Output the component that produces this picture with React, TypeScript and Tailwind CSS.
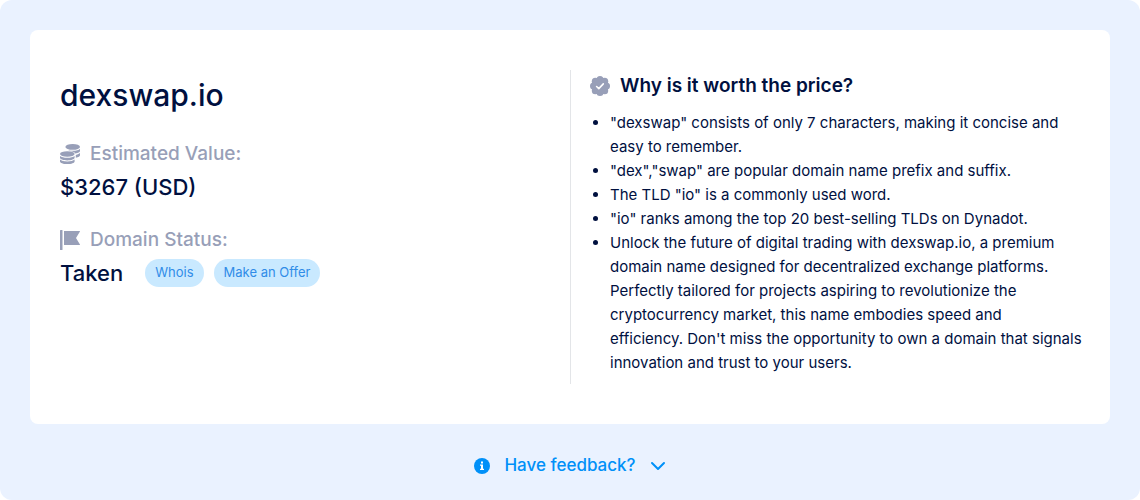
import React from "react";

const reasons = [
  '"dexswap" consists of only 7 characters, making it concise and easy to remember.',
  '"dex","swap" are popular domain name prefix and suffix.',
  'The TLD "io" is a commonly used word.',
  '"io" ranks among the top 20 best-selling TLDs on Dynadot.',
  "Unlock the future of digital trading with dexswap.io, a premium domain name designed for decentralized exchange platforms. Perfectly tailored for projects aspiring to revolutionize the cryptocurrency market, this name embodies speed and\nefficiency. Don't miss the opportunity to own a domain that signals\ninnovation and trust to your users.",
];

const CoinsIcon = () => (
  <svg className="h-5 w-5 shrink-0" viewBox="0 0 20 20" fill="currentColor" aria-hidden="true">
    <ellipse cx="12.7" cy="2.9" rx="7.3" ry="2.9" />
    <path d="M20 4.700v2.300c0 1.100-1.800 2-4.600 2.500-.8-1.300-3.200-2.200-6.400-2.500l-.6-.6c1.200.3 2.700.4 4.300.4 3.400 0 6.300-.8 7.300-2.100z" />
    <path d="M20 8.800v2.400c0 1.100-1.500 2-4.200 2.500v-2.800c2-.4 3.500-1.100 4.200-2.100z" />
    <ellipse cx="7.300" cy="10" rx="7.300" ry="2.700" />
    <path d="M0 11.900c1.300 1.200 4.100 1.800 7.300 1.800s6-.6 7.300-1.800v1.900c0 1.500-3.200 2.600-7.300 2.600S0 15.300 0 13.800z" />
    <path d="M0 15.500c1.300 1.200 4.100 1.900 7.300 1.900s6-.7 7.300-1.900v1.900c0 1.500-3.200 2.600-7.300 2.600S0 18.900 0 17.400z" />
  </svg>
);

const FlagIcon = () => (
  <svg className="h-5 w-5 shrink-0" viewBox="0 0 20 20" fill="currentColor" aria-hidden="true">
    <rect width="2.500" height="20" rx="0.5" />
    <path d="M4 1h15.500c.5 0 .6.400.3.800L16 8l3.800 6.200c.3.400.2.800-.3.800H4z" />
  </svg>
);

const BadgeIcon = () => (
  <svg className="h-5 w-5 shrink-0" viewBox="0 0 20 20" aria-hidden="true">
    <g fill="currentColor">
      <circle cx="10" cy="10" r="8.500" />
      <circle cx="10" cy="3.500" r="3.500" />
      <circle cx="14.700" cy="5.300" r="3.500" />
      <circle cx="16.500" cy="10" r="3.500" />
      <circle cx="14.700" cy="14.700" r="3.500" />
      <circle cx="10" cy="16.500" r="3.500" />
      <circle cx="5.300" cy="14.700" r="3.500" />
      <circle cx="3.500" cy="10" r="3.500" />
      <circle cx="5.300" cy="5.300" r="3.500" />
    </g>
    <path
      d="M6.600 10.500 8.800 12.600l4.500-4.700"
      fill="none"
      stroke="#fff"
      strokeWidth="1.600"
      strokeLinecap="round"
      strokeLinejoin="round"
    />
  </svg>
);

const InfoIcon = () => (
  <svg className="h-4 w-4" viewBox="0 0 16 16" aria-hidden="true">
    <circle cx="8" cy="8" r="8" fill="currentColor" />
    <path d="M7 3.500h2v2H7zM6 6.500h3v4.300h1V12H6v-1.200h1V7.700H6z" fill="#fff" />
  </svg>
);

const ChevronIcon = () => (
  <svg className="h-4 w-4" viewBox="0 0 16 16" fill="none" aria-hidden="true">
    <path
      d="m2 5 6 6 6-6"
      stroke="currentColor"
      strokeWidth="2"
      strokeLinecap="round"
      strokeLinejoin="round"
    />
  </svg>
);

export default function App() {
  return (
    <div className="bg-white">
      <main className="rounded-xl bg-[#eaf2ff] px-[30px] pt-[30px] pb-[23px] font-['Inter',sans-serif] text-[#00103f]">
        <section className="grid grid-cols-2 rounded-lg bg-white px-[30px] py-10">
          <div className="pt-1">
            <h1 className="text-[30px] leading-[42px] font-medium">dexswap.io</h1>

            <div className="mt-7 flex items-center gap-2.5 text-[#989fb8]">
              <CoinsIcon />
              <h2 className="text-[19px] leading-5 font-medium">Estimated Value:</h2>
            </div>
            <p className="mt-2 text-[22px] leading-[30px] font-medium">$3267 (USD)</p>

            <div className="mt-7 flex items-center gap-2.5 text-[#989fb8]">
              <FlagIcon />
              <h2 className="text-[19px] leading-5 font-medium">Domain Status:</h2>
            </div>
            <div className="mt-2 flex items-center">
              <p className="mr-[22px] text-[22px] leading-[30px] font-medium">Taken</p>
              <div className="flex gap-2.5 text-[13px] text-[#308ce8]">
                <button type="button" className="h-7 rounded-full bg-[#c9e9ff] px-2.5">
                  Whois
                </button>
                <button type="button" className="h-7 rounded-full bg-[#c9e9ff] px-2.5">
                  Make an Offer
                </button>
              </div>
            </div>
          </div>

          <div className="border-l border-[#e3e5e8] pb-[9px] pl-[19px]">
            <div className="flex items-center gap-2.5">
              <span className="text-[#989fb8]">
                <BadgeIcon />
              </span>
              <h2 className="text-[19px] leading-8 font-semibold">Why is it worth the price?</h2>
            </div>
            <ul className="mt-[9px] -mr-3 list-disc pl-5 text-[15px] leading-6 whitespace-pre-line">
              {reasons.map((reason) => (
                <li key={reason}>{reason}</li>
              ))}
            </ul>
          </div>
        </section>

        <div className="mt-[30px] flex justify-center text-[#0090f8]">
          <button type="button" className="flex items-center text-[17px] leading-[23px] font-medium">
            <InfoIcon />
            <span className="mx-3.5">Have feedback?</span>
            <ChevronIcon />
          </button>
        </div>
      </main>
    </div>
  );
}
